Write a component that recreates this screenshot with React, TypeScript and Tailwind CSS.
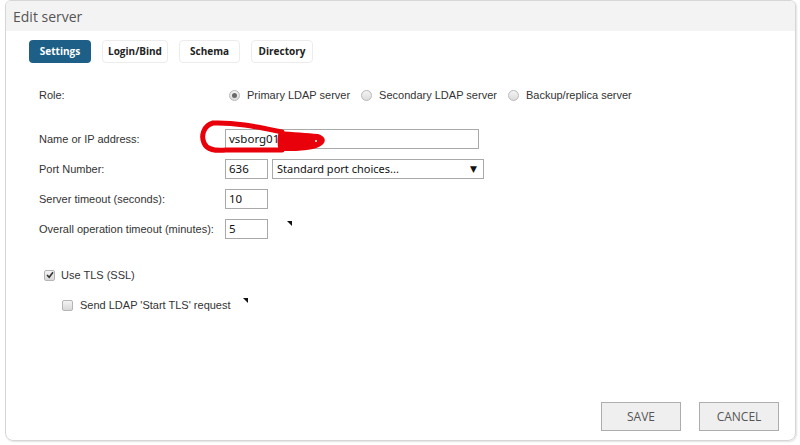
import React from "react";

const Tab = ({ label, w, active }: { label: string; w: string; active?: boolean }) => (
  <button
    className={
      active
        ? `h-[23px] rounded-[4px] bg-[#1d5f86] text-[10px] font-bold text-white ${w}`
        : `h-[23px] rounded-[4px] border border-[#ececec] bg-white text-[10px] font-bold text-[#222] ${w}`
    }
    style={{ fontFamily: "'Open Sans', 'Noto Sans', sans-serif" }}
  >
    {label}
  </button>
);

const Radio = ({ checked }: { checked?: boolean }) => (
  <span className="flex h-[11px] w-[11px] items-center justify-center rounded-full border border-[#b8b8b8] bg-gradient-to-b from-[#f4f4f4] to-[#dcdcdc]">
    {checked && <span className="h-[5px] w-[5px] rounded-full bg-[#6a6a6a]" />}
  </span>
);

const Mark = () => (
  <svg width="5" height="5" viewBox="0 0 5 5" className="shrink-0">
    <path d="M0 0 L5 0 L5 5 Z" fill="#111" />
  </svg>
);

const Input = ({ value, w }: { value: string; w: string }) => (
  <div
    className={`flex h-[20px] items-center border border-[#a9a9a9] bg-white px-[3px] text-[11.5px] text-[#111] ${w}`}
    style={{ fontFamily: "'Noto Sans', 'DejaVu Sans', sans-serif" }}
  >
    {value}
  </div>
);

const Row = ({ label, children }: { label: string; children: React.ReactNode }) => (
  <div className="flex h-[20px] items-center">
    <div className="w-[186px] shrink-0 whitespace-nowrap">{label}</div>
    <div className="flex items-center">{children}</div>
  </div>
);

export default function App() {
  return (
    <div className="h-[445px] w-[800px] overflow-hidden bg-white">
      <div className="relative ml-[5px] h-[441px] w-[791px] overflow-hidden rounded-b-[8px] rounded-t-[6px] border border-[#d6d6d6] shadow-[1px_1px_2px_rgba(0,0,0,0.12)]">
        <div
          className="flex h-[30px] items-center bg-[#f3f3f3] pl-[7px] text-[14px] text-[#555]"
          style={{ fontFamily: "'Open Sans', 'Noto Sans', sans-serif" }}
        >
          Edit server
        </div>

        <div className="flex flex-col" style={{ fontFamily: "'Liberation Sans', Arial, sans-serif" }}>
          <div className="ml-[23px] mt-[9px] flex gap-[11px]">
            <Tab label="Settings" w="w-[62px]" active />
            <Tab label="Login/Bind" w="w-[66px]" />
            <Tab label="Schema" w="w-[61px]" />
            <Tab label="Directory" w="w-[62px]" />
          </div>

          <div className="ml-[33px] mt-[22px] flex flex-col text-[11px] text-[#333]">
            <div className="flex h-[20px] items-center">
              <div className="w-[190px] shrink-0">Role:</div>
              <div className="flex items-center">
                <Radio checked />
                <span className="ml-[7px] mr-[11px]">Primary LDAP server</span>
                <Radio />
                <span className="ml-[7px] mr-[11px]">Secondary LDAP server</span>
                <Radio />
                <span className="ml-[7px]">Backup/replica server</span>
              </div>
            </div>

            <div className="mt-[24px] flex flex-col gap-[10px]">
              <Row label="Name or IP address:">
                <Input value="vsborg01." w="w-[254px]" />
              </Row>
              <Row label="Port Number:">
                <Input value="636" w="w-[43px]" />
                <div
                  className="ml-[4px] flex h-[20px] w-[212px] items-center justify-between border border-[#a9a9a9] bg-white pl-[4px] pr-[6px] text-[11px] text-[#111]"
                  style={{ fontFamily: "'Noto Sans', 'DejaVu Sans', sans-serif" }}
                >
                  <span>Standard port choices...</span>
                  <span className="text-[9px]">▼</span>
                </div>
              </Row>
              <Row label="Server timeout (seconds):">
                <Input value="10" w="w-[43px]" />
              </Row>
              <Row label="Overall operation timeout (minutes):">
                <Input value="5" w="w-[43px]" />
                <span className="mb-[12px] ml-[19px]">
                  <Mark />
                </span>
              </Row>
            </div>

            <div className="ml-[5px] mt-[26px] flex h-[20px] items-center">
              <span className="flex h-[11px] w-[11px] items-center justify-center rounded-[2px] border border-[#b5b5b5] bg-gradient-to-b from-[#f4f4f4] to-[#d8d8d8]">
                <svg width="8" height="8" viewBox="0 0 8 8">
                  <path d="M1 4 L3.2 6.3 L7 1.2" stroke="#333" strokeWidth="1.6" fill="none" />
                </svg>
              </span>
              <span className="ml-[6px]">Use TLS (SSL)</span>
            </div>

            <div className="ml-[23px] mt-[10px] flex h-[20px] items-center">
              <span className="h-[11px] w-[11px] rounded-[2px] border border-[#b5b5b5] bg-gradient-to-b from-[#f4f4f4] to-[#d8d8d8]" />
              <span className="ml-[7px]">Send LDAP 'Start TLS' request</span>
              <span className="mb-[10px] ml-[12px]">
                <Mark />
              </span>
            </div>
          </div>

          <div
            className="mr-[16px] mt-[87px] flex justify-end gap-[18px]"
            style={{ fontFamily: "'Open Sans', 'Noto Sans', sans-serif" }}
          >
            <button className="h-[29px] w-[80px] border border-[#adadad] bg-[#efefef] text-[12px] text-[#555]">SAVE</button>
            <button className="h-[29px] w-[80px] border border-[#adadad] bg-[#efefef] text-[12px] text-[#555]">CANCEL</button>
          </div>
        </div>

        {/* red scribble over the host name */}
        <svg className="pointer-events-none absolute left-[-6px] top-[-1px]" width="800" height="445" viewBox="0 0 800 445">
          <path
            d="M282 132 C262 128 236 122 213 123 C203 126 201 136 204 143 C207 150 215 151 226 150 L282 150"
            stroke="#e8000a"
            strokeWidth="5"
            fill="none"
            strokeLinecap="round"
          />
          <path
            d="M279 131 C292 132 308 133 318 134 C324 136 326 139 324 143 C320 149 306 151 290 151 L279 151 C277 145 277 137 279 131 Z"
            fill="#e8000a"
          />
          <circle cx="316" cy="141" r="1" fill="#fff" />
        </svg>
      </div>
    </div>
  );
}
